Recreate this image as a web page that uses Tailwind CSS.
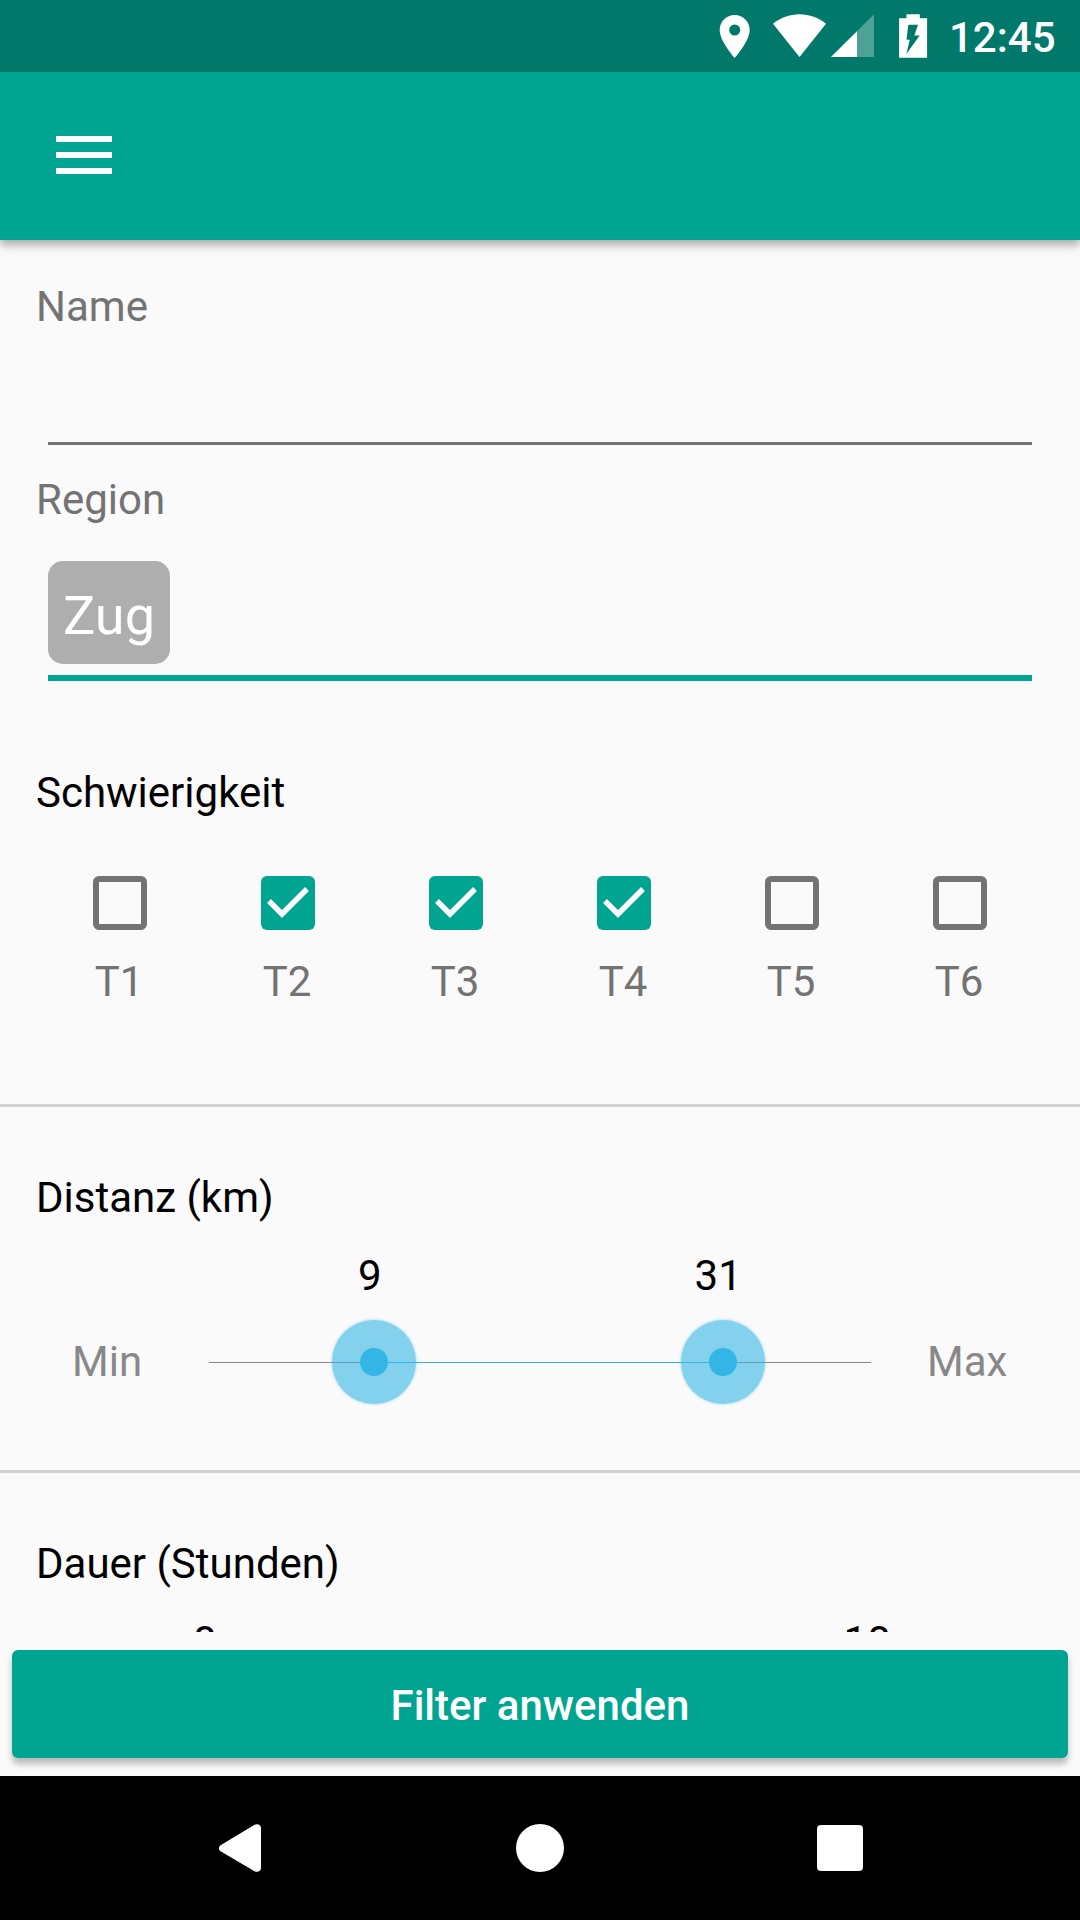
<!DOCTYPE html>
<html lang="de">
<head>
<meta charset="utf-8">
<meta name="viewport" content="width=device-width, initial-scale=1">
<title>Filter</title>
<script src="https://cdn.jsdelivr.net/npm/@tailwindcss/browser@4"></script>
</head>
<body class="bg-black">
<div class="flex h-[1920px] w-[1080px] flex-col overflow-hidden bg-[#fafafa] font-[Roboto,sans-serif] text-[42px] leading-[48px] text-black">

  <!-- Status bar -->
  <div class="flex h-[72px] shrink-0 items-center bg-[#00796b] pl-[719px] text-white">
    <svg class="h-[72px] w-[220px] shrink-0" viewBox="719 0 220 72" fill="currentColor">
      <path fill-rule="evenodd" d="M734.7 15c-8.4 0-15 6.700-15 15 0 11.300 15 28 15 28s15-16.700 15-28c0-8.300-6.600-15-15-15zm0 20.500a5.500 5.500 0 1 1 0-11 5.500 5.500 0 0 1 0 11z"/>
      <path d="M799.500 57 773 23.800C780.500 17.800 789.500 14.300 799.500 14.300s19 3.500 26.500 9.500z"/>
      <path fill-opacity=".3" d="M831 57 874 14.300V57z"/>
      <path d="M831 57 857 31.200V57z"/>
      <path fill-rule="evenodd" d="M906.500 14.200h13.300v4h7.300v39.600h-28V18.200h7.400zM908.300 24.800 906.500 39.700H909.800L906.300 54 919.700 35.500H914.300L918 24.800z"/>
    </svg>
    <span class="ml-[10px] pt-1 font-medium">12:45</span>
  </div>

  <!-- App bar -->
  <header class="relative z-10 flex h-[168px] shrink-0 items-center bg-[#00a591] pl-14 shadow-[0_5px_9px_rgba(0,0,0,0.33)]">
    <div class="mb-[2px] flex w-14 flex-col gap-[10px]">
      <div class="h-[6px] bg-white"></div>
      <div class="h-[6px] bg-white"></div>
      <div class="h-[6px] bg-white"></div>
    </div>
  </header>

  <!-- Scrollable filter form -->
  <main class="flex h-[1392px] shrink-0 flex-col overflow-hidden">
    <section class="flex h-[864px] shrink-0 flex-col px-9 pt-[43px]">
      <div class="text-[#737373]">Name</div>
      <div class="mx-3 mt-[111px] h-[3px] shrink-0 bg-[#737373]"></div>
      <div class="mt-[31px] text-[#737373]">Region</div>
      <div class="mx-3 mt-[37px] flex h-[120px] shrink-0 items-start border-b-[6px] border-[#00a591]">
        <span class="flex h-[103px] w-[122px] items-center justify-center rounded-[15px] bg-[#aeaeae] pt-[6px] text-[54px] leading-[60px] text-white">Zug</span>
      </div>
      <div class="mt-[88px]">Schwierigkeit</div>
      <div class="mt-[59px] grid grid-cols-6 text-[#737373]">
        <div class="flex flex-col items-center gap-7"><div class="size-[54px] rounded-[6px] border-6 border-[#737373]"></div><span class="pr-[2px]">T1</span></div>
        <div class="flex flex-col items-center gap-7"><svg class="size-[54px] rounded-[6px] bg-[#00a591]" viewBox="0 0 54 54"><path d="M8 25 21 38 46 13" fill="none" stroke="#fafafa" stroke-width="5.500"/></svg><span class="pr-[2px]">T2</span></div>
        <div class="flex flex-col items-center gap-7"><svg class="size-[54px] rounded-[6px] bg-[#00a591]" viewBox="0 0 54 54"><path d="M8 25 21 38 46 13" fill="none" stroke="#fafafa" stroke-width="5.500"/></svg><span class="pr-[2px]">T3</span></div>
        <div class="flex flex-col items-center gap-7"><svg class="size-[54px] rounded-[6px] bg-[#00a591]" viewBox="0 0 54 54"><path d="M8 25 21 38 46 13" fill="none" stroke="#fafafa" stroke-width="5.500"/></svg><span class="pr-[2px]">T4</span></div>
        <div class="flex flex-col items-center gap-7"><div class="size-[54px] rounded-[6px] border-6 border-[#737373]"></div><span class="pr-[2px]">T5</span></div>
        <div class="flex flex-col items-center gap-7"><div class="size-[54px] rounded-[6px] border-6 border-[#737373]"></div><span class="pr-[2px]">T6</span></div>
      </div>
    </section>

    <section class="flex h-[366px] shrink-0 flex-col border-t-3 border-[#d2d2d2] pt-[67px]">
      <div class="px-9">Distanz (km)</div>
      <div class="mt-[30px] flex h-12 gap-[313px] pl-[358px]"><span>9</span><span>31</span></div>
      <div class="mt-[38px] flex h-12 items-center text-[#888888]">
        <span class="w-[137px] pl-[72px]">Min</span>
        <div class="relative ml-[72px] h-px w-[662px] shrink-0 bg-[#888888]">
          <div class="absolute top-0 h-px w-[349px] bg-[#33b5e5]" style="left:165px"></div>
          <div class="absolute -top-[42px] flex size-[84px] -translate-x-1/2 items-center justify-center rounded-full bg-[#33b5e5]/60 shadow-[0_0_3px_rgba(51,181,229,0.6)]" style="left:165px"><div class="size-7 rounded-full bg-[#33b5e5]"></div></div>
          <div class="absolute -top-[42px] flex size-[84px] -translate-x-1/2 items-center justify-center rounded-full bg-[#33b5e5]/60 shadow-[0_0_3px_rgba(51,181,229,0.6)]" style="left:514px"><div class="size-7 rounded-full bg-[#33b5e5]"></div></div>
        </div>
        <span class="ml-[56px]">Max</span>
      </div>
    </section>

    <section class="flex h-[366px] shrink-0 flex-col border-t-3 border-[#d0d1d5] pt-[67px]">
      <div class="px-9">Dauer (Stunden)</div>
      <div class="mt-[30px] flex h-12 shrink-0 gap-[627px] pl-[193px]"><span>0</span><span>10</span></div>
    </section>
  </main>

  <!-- Apply button -->
  <div class="h-[144px] shrink-0 px-3 pt-[18px]">
    <button class="flex h-[108px] w-full items-center justify-center rounded-[6px] bg-[#00a591] pt-[3px] font-medium text-white shadow-[0_6px_6px_rgba(0,0,0,0.26)]">Filter anwenden</button>
  </div>

  <!-- Navigation bar -->
  <nav class="flex h-[144px] shrink-0 items-center bg-black pl-[219px]">
    <svg class="h-12 w-[42px]" viewBox="0 0 42 48" fill="white"><path d="M2 21 35.500 .8C38.500-.9 42 .8 42 4v40c0 3.200-3.500 4.900-6.500 3.200L2 27.500C-.7 26-.7 22.600 2 21z"/></svg>
    <div class="ml-[255px] size-12 rounded-full bg-white"></div>
    <div class="ml-[253px] size-[46px] rounded-[4px] bg-white"></div>
  </nav>
</div>
</body>
</html>
